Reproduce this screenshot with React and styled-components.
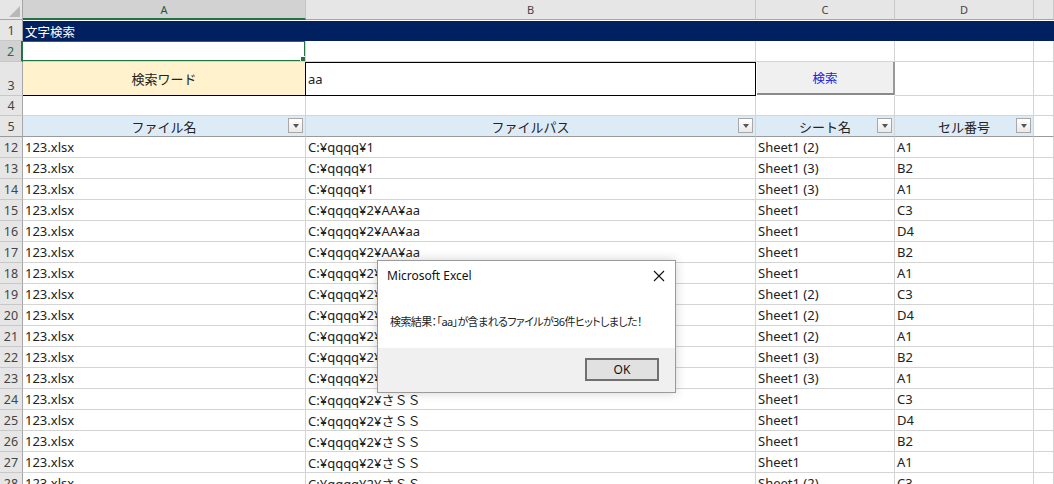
import React from 'react';
import styled, { createGlobalStyle } from 'styled-components';

const Global = createGlobalStyle`
  html, body { margin: 0; padding: 0; background: #fff; }
  body { font-family: "Noto Sans", "Noto Sans CJK JP", sans-serif; overflow: hidden; }
`;

const Page = styled.div`
  position: relative;
  width: 1054px;
  height: 484px;
  overflow: hidden;
`;

const Sheet = styled.div`
  display: grid;
  grid-template-columns: 23px 283px 450px 139px 139px 1fr;
  grid-template-rows: 20px 21px 21px 34px 20px 21px repeat(17, 21px);
  font-size: 13px;
  color: #222;
`;

const Corner = styled.div`
  background: #e6e6e6;
  border-right: 1px solid #a6a6a6;
  border-bottom: 1px solid #a6a6a6;
  display: flex;
  align-items: flex-end;
  justify-content: flex-end;
  padding: 0 2px 2px 0;
  box-sizing: border-box;
`;

const ColHead = styled.div`
  box-sizing: border-box;
  background: ${p => (p.$active ? '#d2d2d2' : '#e6e6e6')};
  border-right: 1px solid ${p => (p.$active ? '#c4c4c4' : '#c8c8c8')};
  border-bottom: ${p => (p.$active ? '2px solid #217346' : '1px solid #a6a6a6')};
  color: ${p => (p.$active ? '#1e5a3a' : '#444')};
  font-size: 11px;
  display: flex;
  align-items: center;
  justify-content: center;
`;

const RowHead = styled.div`
  box-sizing: border-box;
  background: ${p => (p.$active ? '#d2d2d2' : '#e6e6e6')};
  border-right: ${p => (p.$active ? '2px solid #217346' : '1px solid #a6a6a6')};
  border-bottom: 1px solid ${p => (p.$freeze ? '#9a9a9a' : '#c8c8c8')};
  color: ${p => (p.$active ? '#217346' : '#444')};
  font-size: 12.5px;
  display: flex;
  align-items: flex-end;
  justify-content: center;
  padding-bottom: 1px;
`;

const Cell = styled.div`
  position: relative;
  box-sizing: border-box;
  background: ${p => p.$bg || '#fff'};
  border-right: 1px solid ${p => p.$right || '#d4d4d4'};
  border-bottom: 1px solid ${p => p.$bottom || '#d4d4d4'};
  border-top: ${p => (p.$top ? `1px solid ${p.$top}` : 'none')};
  color: ${p => p.$color || '#222'};
  display: flex;
  align-items: center;
  justify-content: ${p => (p.$center ? 'center' : 'flex-start')};
  padding: 0 2px;
  white-space: nowrap;
  overflow: hidden;
`;

const TitleBar = styled.div`
  grid-column: 2 / -1;
  background: #002060;
  color: #fff;
  font-size: 12.5px;
  display: flex;
  align-items: center;
  padding: 0 2px;
  margin-top: 1px;
`;

const Selected = styled.div`
  position: absolute;
  inset: -1px -1px -1px -2px;
  border: 2px solid #217346;
  pointer-events: none;
`;

const Handle = styled.div`
  position: absolute;
  right: -4px;
  bottom: -4px;
  width: 6px;
  height: 6px;
  background: #217346;
  border: 1px solid #fff;
`;

const SearchButton = styled.div`
  box-sizing: border-box;
  margin: 0 0 1px 1px;
  background: #f0f0f0;
  border-right: 2px solid #9a9a9a;
  border-bottom: 2px solid #8a8a8a;
  color: #2222dd;
  font-size: 12.5px;
  display: flex;
  align-items: center;
  justify-content: center;
`;

const FilterBtn = styled.div`
  position: absolute;
  right: 2px;
  top: 2px;
  width: 15px;
  height: 15px;
  box-sizing: border-box;
  border: 1px solid #a8a8a8;
  background: linear-gradient(#ffffff, #e9e9e9);
  display: flex;
  align-items: center;
  justify-content: center;
`;

const Arrow = styled.span`
  width: 0;
  height: 0;
  border-left: 3.5px solid transparent;
  border-right: 3.5px solid transparent;
  border-top: 4px solid #555;
  margin-top: 1px;
`;

const Dialog = styled.div`
  position: absolute;
  left: 377px;
  top: 260px;
  width: 299px;
  height: 133px;
  box-sizing: border-box;
  border: 1px solid #9a9a9a;
  background: #fff;
  box-shadow: 0 0 10px rgba(0, 0, 0, 0.18);
  display: flex;
  flex-direction: column;
  font-family: "Noto Sans", "Noto Sans CJK JP", sans-serif;
`;

const DlgTitle = styled.div`
  height: 29px;
  display: flex;
  align-items: center;
  justify-content: space-between;
  padding: 0 10px 0 9px;
  font-size: 12px;
  color: #111;
`;

const DlgBody = styled.div`
  flex: 1;
  display: flex;
  align-items: center;
  padding: 3px 0 0 12px;
  font-size: 11px;
  letter-spacing: -0.6px;
  color: #222;
  font-feature-settings: "palt";
  white-space: nowrap;
`;

const DlgFoot = styled.div`
  height: 42px;
  background: #f0f0f0;
  display: flex;
  align-items: center;
  justify-content: flex-end;
  padding: 0 16px 2px 0;
`;

const OkButton = styled.div`
  width: 74px;
  height: 23px;
  box-sizing: border-box;
  border: 2px solid #707070;
  background: #e1e1e1;
  font-size: 12px;
  color: #111;
  display: flex;
  align-items: center;
  justify-content: center;
`;

const rows = [
  [12, '123.xlsx', 'C:¥qqqq¥1', 'Sheet1 (2)', 'A1'],
  [13, '123.xlsx', 'C:¥qqqq¥1', 'Sheet1 (3)', 'B2'],
  [14, '123.xlsx', 'C:¥qqqq¥1', 'Sheet1 (3)', 'A1'],
  [15, '123.xlsx', 'C:¥qqqq¥2¥AA¥aa', 'Sheet1', 'C3'],
  [16, '123.xlsx', 'C:¥qqqq¥2¥AA¥aa', 'Sheet1', 'D4'],
  [17, '123.xlsx', 'C:¥qqqq¥2¥AA¥aa', 'Sheet1', 'B2'],
  [18, '123.xlsx', 'C:¥qqqq¥2¥AA¥aa', 'Sheet1', 'A1'],
  [19, '123.xlsx', 'C:¥qqqq¥2¥AA¥aa', 'Sheet1 (2)', 'C3'],
  [20, '123.xlsx', 'C:¥qqqq¥2¥AA¥aa', 'Sheet1 (2)', 'D4'],
  [21, '123.xlsx', 'C:¥qqqq¥2¥AA¥aa', 'Sheet1 (2)', 'A1'],
  [22, '123.xlsx', 'C:¥qqqq¥2¥AA¥aa', 'Sheet1 (3)', 'B2'],
  [23, '123.xlsx', 'C:¥qqqq¥2¥AA¥aa', 'Sheet1 (3)', 'A1'],
  [24, '123.xlsx', 'C:¥qqqq¥2¥さＳＳ', 'Sheet1', 'C3'],
  [25, '123.xlsx', 'C:¥qqqq¥2¥さＳＳ', 'Sheet1', 'D4'],
  [26, '123.xlsx', 'C:¥qqqq¥2¥さＳＳ', 'Sheet1', 'B2'],
  [27, '123.xlsx', 'C:¥qqqq¥2¥さＳＳ', 'Sheet1', 'A1'],
  [28, '123.xlsx', 'C:¥qqqq¥2¥さＳＳ', 'Sheet1 (2)', 'C3'],
];

const headers = ['ファイル名', 'ファイルパス', 'シート名', 'セル番号'];

export default function App() {
  return (
    <Page>
      <Global />
      <Sheet>
        <Corner>
          <svg width="11" height="11" viewBox="0 0 11 11">
            <polygon points="11,0 11,11 0,11" fill="#b8b8b8" />
          </svg>
        </Corner>
        <ColHead $active>A</ColHead>
        <ColHead>B</ColHead>
        <ColHead>C</ColHead>
        <ColHead>D</ColHead>
        <ColHead />

        <RowHead>1</RowHead>
        <TitleBar>文字検索</TitleBar>

        <RowHead $active>2</RowHead>
        <Cell>
          <Selected>
            <Handle />
          </Selected>
        </Cell>
        <Cell />
        <Cell />
        <Cell />
        <Cell />

        <RowHead>3</RowHead>
        <Cell $bg="#fff2cc" $center $right="#000" $bottom="#000">検索ワード</Cell>
        <Cell $right="#000" $bottom="#000" $top="#000">aa</Cell>
        <SearchButton>検索</SearchButton>
        <Cell />
        <Cell />

        <RowHead>4</RowHead>
        <Cell />
        <Cell />
        <Cell />
        <Cell />
        <Cell />

        <RowHead $freeze>5</RowHead>
        {headers.map(h => (
          <Cell key={h} $bg="#ddebf7" $center $bottom="#9a9a9a">
            {h}
            <FilterBtn>
              <Arrow />
            </FilterBtn>
          </Cell>
        ))}
        <Cell $bottom="#9a9a9a" />

        {rows.map(([n, a, b, c, d]) => (
          <React.Fragment key={n}>
            <RowHead>{n}</RowHead>
            <Cell>{a}</Cell>
            <Cell>{b}</Cell>
            <Cell>{c}</Cell>
            <Cell>{d}</Cell>
            <Cell />
          </React.Fragment>
        ))}
      </Sheet>

      <Dialog>
        <DlgTitle>
          <span>Microsoft Excel</span>
          <svg width="12" height="12" viewBox="0 0 12 12">
            <path d="M1 1L11 11M11 1L1 11" stroke="#111" strokeWidth="1.1" />
          </svg>
        </DlgTitle>
        <DlgBody>検索結果：「aa」が含まれるファイルが36件ヒットしました！</DlgBody>
        <DlgFoot>
          <OkButton>OK</OkButton>
        </DlgFoot>
      </Dialog>
    </Page>
  );
}
